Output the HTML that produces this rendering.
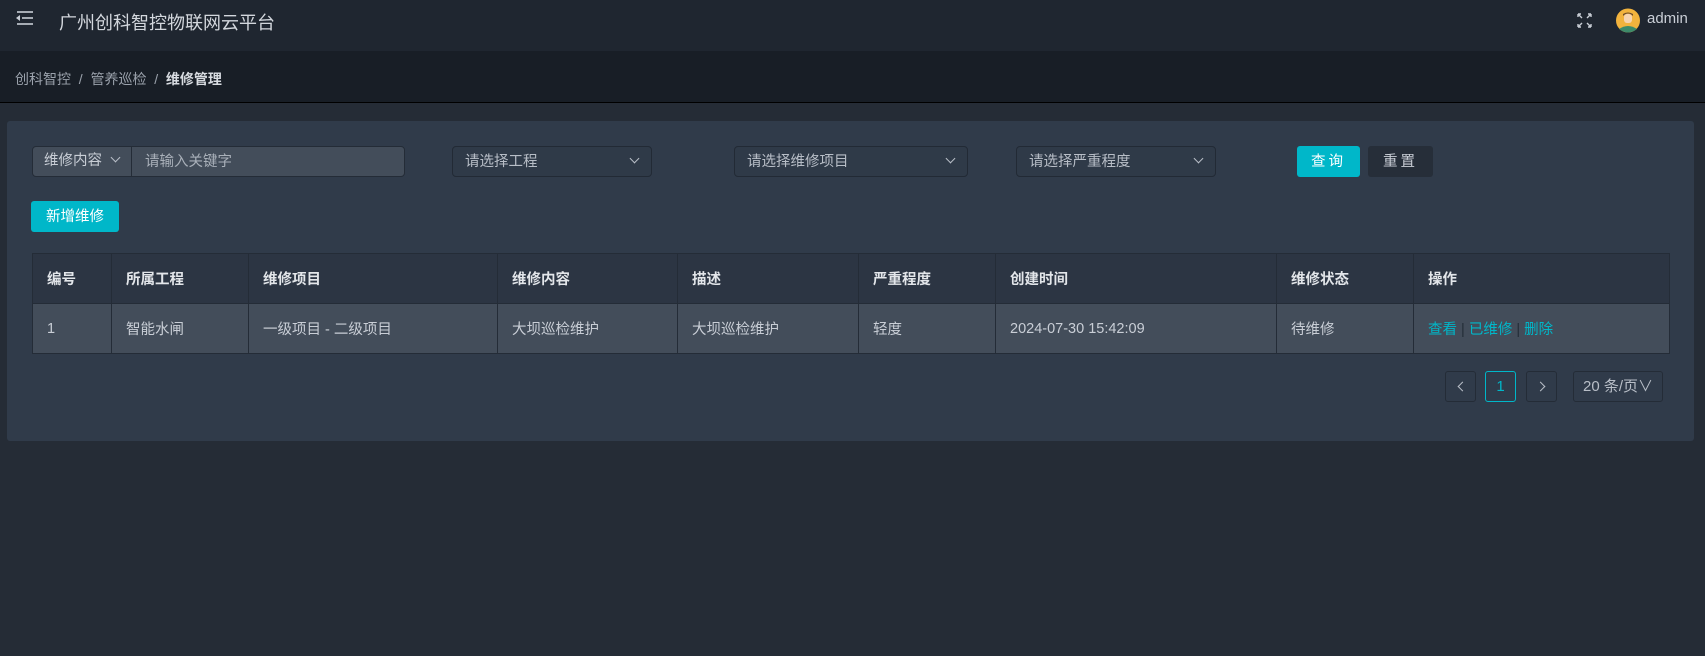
<!DOCTYPE html>
<html><head><meta charset="utf-8"><style>
*{box-sizing:border-box;margin:0;padding:0}
body{width:1705px;height:656px;background:#252c36;font-family:"Liberation Sans","Noto Sans CJK SC",sans-serif;color:#c9ced6;position:relative;overflow:hidden;font-size:15px}
.abs{position:absolute}
.hdr{left:0;top:0;width:1705px;height:51px;background:#1f2630}
.bc{left:0;top:51px;width:1705px;height:52px;background:#181e26;border-bottom:1px solid #000}
.card{left:7px;top:121px;width:1687px;height:320px;background:#303b4a;border-radius:3px}
.sel{background:#2f3a48;border:1px solid #222a35;border-radius:4px;height:31px;line-height:31px;padding-left:12px;color:#b8bec7;font-size:14.5px}
.chev{position:absolute;right:13px;top:8px;width:7px;height:7px;border-right:1px solid #b8bec7;border-bottom:1px solid #b8bec7;transform:rotate(45deg)}
table{border-collapse:collapse;position:absolute;left:32px;top:253px;width:1638px;font-size:14.5px}
td,th{border:1px solid #242c37;text-align:left;padding-left:14px}
th{background:#2c3543;height:50px;color:#e3e6ea;font-weight:bold}
td{background:#434d5a;height:50px;color:#c9ced6}
.pg{border:1px solid #242c37;border-radius:3px;height:31px;top:371px;text-align:center;line-height:29px;color:#b8bec7}
.pa{position:absolute;top:11px;width:7px;height:7px;border-left:1px solid #b8bec7;border-bottom:1px solid #b8bec7}
</style></head><body>
<div class="abs hdr"></div>
<svg class="abs" style="left:15px;top:10px" width="20" height="16" viewBox="0 0 20 16"><g stroke="#c9ced6" stroke-width="1.6"><line x1="2" y1="2" x2="18" y2="2"/><line x1="7" y1="8" x2="18" y2="8"/><line x1="2" y1="14" x2="18" y2="14"/></g><path d="M5 5 L1 8 L5 11Z" fill="#c9ced6"/></svg>
<div class="abs" style="left:59px;top:9px;font-size:18px;color:#d3d7dd">广州创科智控物联网云平台</div>
<svg class="abs" style="left:1577px;top:13px" width="15" height="15" viewBox="0 0 15 15"><g stroke="#c9ced6" stroke-width="1.4" fill="none"><path d="M1 1l4 4M1 1h3M1 1v3M14 1l-4 4M14 1h-3M14 1v3M1 14l4-4M1 14h3M1 14v-3M14 14l-4-4M14 14h-3M14 14v-3"/></g></svg>
<svg class="abs" style="left:1616px;top:8px" width="24" height="25" viewBox="0 0 24 25"><circle cx="12" cy="12.5" r="12" fill="#f2b33d"/><rect x="8" y="6" width="8" height="9" rx="3" fill="#f6d4b0"/><path d="M7 8q5-5 10 0v-2q-5-3-10 0z" fill="#6b4a2e"/><path d="M3 21q9-6 18 0q-9 7-18 0z" fill="#3d8a6a"/></svg>
<div class="abs" style="left:1647px;top:10px;font-size:15px;color:#c9ced6">admin</div>
<div class="abs bc"></div>
<div class="abs" style="left:15px;top:69px;font-size:14px;color:#9aa1ab">创科智控 &nbsp;/&nbsp; 管养巡检 &nbsp;/&nbsp; <span style="color:#d8dce1;font-weight:bold">维修管理</span></div>
<div class="abs card"></div>
<div class="abs" style="left:32px;top:146px;width:373px;height:31px;background:#434d5a;border:1px solid #242c37;border-radius:4px"></div>
<div class="abs" style="left:32px;top:146px;width:100px;height:31px;border-right:1px solid #242c37;line-height:31px;padding-left:12px;font-size:14.5px;color:#c9ced6">维修内容<span class="chev" style="right:12px"></span></div>
<div class="abs" style="left:145px;top:147px;line-height:31px;color:#a9b0b9;font-size:14.5px">请输入关键字</div>
<div class="abs sel" style="left:452px;top:146px;width:200px">请选择工程<span class="chev"></span></div>
<div class="abs sel" style="left:734px;top:146px;width:234px">请选择维修项目<span class="chev"></span></div>
<div class="abs sel" style="left:1016px;top:146px;width:200px">请选择严重程度<span class="chev"></span></div>
<div class="abs" style="left:1297px;top:146px;width:63px;height:31px;background:#00b7c9;border-radius:3px;color:#fff;text-align:center;line-height:32px;font-size:14.5px;letter-spacing:3px">查询</div>
<div class="abs" style="left:1368px;top:146px;width:65px;height:31px;background:#262e39;border-radius:3px;color:#c9ced6;text-align:center;line-height:32px;font-size:14.5px;letter-spacing:3px">重置</div>
<div class="abs" style="left:31px;top:201px;width:88px;height:31px;background:#00b7c9;border-radius:3px;color:#fff;text-align:center;line-height:32px;font-size:14.5px">新增维修</div>
<table>
<tr><th style="width:79px">编号</th><th style="width:137px">所属工程</th><th style="width:249px">维修项目</th><th style="width:180px">维修内容</th><th style="width:181px">描述</th><th style="width:137px">严重程度</th><th style="width:281px">创建时间</th><th style="width:137px">维修状态</th><th>操作</th></tr>
<tr><td>1</td><td>智能水闸</td><td>一级项目 - 二级项目</td><td>大坝巡检维护</td><td>大坝巡检维护</td><td>轻度</td><td>2024-07-30 15:42:09</td><td>待维修</td><td style="color:#00b7c9">查看 <span style="color:#242c37">|</span> 已维修 <span style="color:#242c37">|</span> 删除</td></tr>
</table>
<div class="abs pg" style="left:1445px;width:31px"><span class="pa" style="left:13px;transform:rotate(45deg)"></span></div>
<div class="abs pg" style="left:1485px;width:31px;border-color:#00b7c9;color:#00b7c9">1</div>
<div class="abs pg" style="left:1526px;width:31px"><span class="pa" style="left:10px;transform:rotate(-135deg)"></span></div>
<div class="abs pg" style="left:1573px;width:90px">20 条/页∨</div>
</body></html>
